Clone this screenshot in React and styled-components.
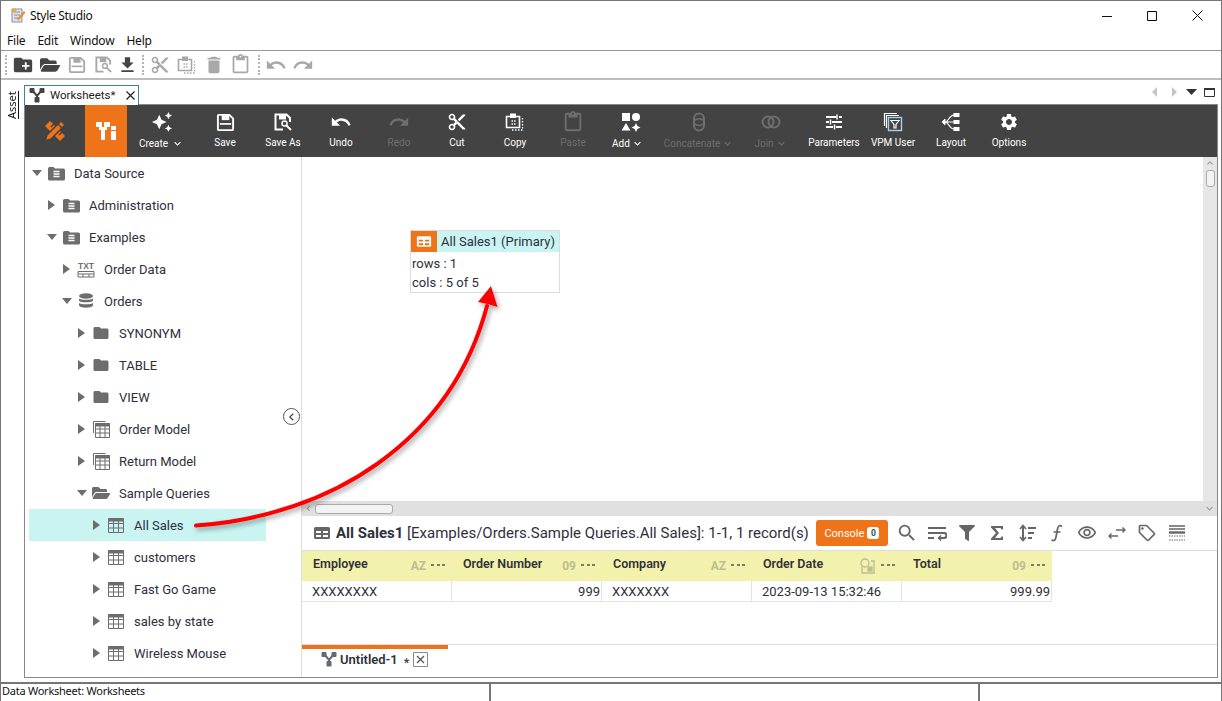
import React from 'react'
import styled, { createGlobalStyle } from 'styled-components'
import {
  MdCreateNewFolder, MdFolder, MdFileDownload, MdContentCut, MdDelete,
  MdOutlineContentPaste, MdUndo, MdRedo, MdAutoAwesome, MdSettings, MdSearch, MdOutlineVisibility,
  MdOutlineLocalOffer, MdExpandMore, MdChevronLeft,
} from 'react-icons/md'
import { FaFilter, FaFolderOpen } from 'react-icons/fa'

const Global = createGlobalStyle`
  html, body { margin: 0; padding: 0; background: #fff; }
  * { box-sizing: border-box; }
  body { font-family: Roboto, "Liberation Sans", sans-serif; color: #2c2c38; overflow: hidden; }
`

const Page = styled.div`
  position: relative;
  width: 1222px;
  height: 701px;
  overflow: hidden;
  display: flex;
  flex-direction: column;
  border: 1px solid #767676;
  border-bottom: none;
  background: #fff;
`

const TitleBar = styled.div`
  height: 29px;
  display: flex;
  align-items: center;
  padding-left: 8px;
  gap: 4px;
  font: 12px "Noto Sans", "Liberation Sans", sans-serif;
  color: #111;
`
const TitleText = styled.span`
  flex: 1;
  letter-spacing: -0.3px;
`
const WinButtons = styled.div`
  display: flex;
  align-self: flex-start;
  margin-top: 8px;
  padding-right: 18px;
  svg { display: block; margin-left: 35px; }
`
const MenuBar = styled.div`
  height: 21px;
  display: flex;
  align-items: center;
  padding-left: 6px;
  gap: 12px;
  font: 12px "Noto Sans", "Liberation Sans", sans-serif;
  letter-spacing: -0.2px;
  color: #111;
  border-bottom: 1px solid #9a9a9a;
`
const IconBar = styled.div`
  height: 29px;
  display: flex;
  align-items: center;
  padding-left: 4px;
  border-bottom: 2px solid #bdbdbd;
`
const Grip = styled.span`
  width: 1px;
  height: 20px;
  border-left: 2px dotted #b5b5b5;
  margin: 0 2px 0 4px;
  flex: none;
  &:first-child { margin-left: 0; }
`
const BarIcon = styled.span`
  width: ${p => p.$w || 27}px;
  flex: none;
  display: flex;
  justify-content: center;
  color: ${p => (p.$off ? '#a8a8a8' : '#444')};
  svg { display: block; }
`
const Workspace = styled.div`
  flex: 1;
  display: flex;
  min-height: 0;
`
const AssetStrip = styled.div`
  width: 23px;
  flex: none;
  padding-top: 11px;
  display: flex;
  justify-content: center;
`
const AssetText = styled.span`
  writing-mode: vertical-rl;
  transform: rotate(180deg);
  font: 11px "Noto Sans", "Liberation Sans", sans-serif;
  color: #111;
  height: 28px;
  border-left: 1px solid #111;
  line-height: 12px;
`
const Main = styled.div`
  width: 1194px;
  flex: none;
  display: flex;
  flex-direction: column;
`
const TabRow = styled.div`
  height: 25px;
  flex: none;
  display: flex;
  align-items: flex-end;
  justify-content: space-between;
  border-bottom: 1px solid #888;
`
const DocTab = styled.div`
  width: 115px;
  height: 20px;
  margin-bottom: -1px;
  display: flex;
  align-items: center;
  gap: 5px;
  padding: 0 0 1px 4px;
  background: #fff;
  border: 1px solid #3f7fae;
  border-bottom: none;
  font-size: 11.500px;
  color: #222;
`
const TabClose = styled.span`
  margin-left: 6px;
  display: flex;
`
const TabTools = styled.div`
  display: flex;
  align-items: center;
  height: 24px;
  gap: 7px;
  margin-right: 3px;
  svg { display: block; }
`
const Frame = styled.div`
  flex: 1;
  display: flex;
  flex-direction: column;
  min-height: 0;
  border-left: 1px solid #888;
  border-right: 1px solid #888;
  border-bottom: 1px solid #888;
`
const Ribbon = styled.div`
  height: 52px;
  flex: none;
  display: flex;
  background: #434343;
`
const LogoCell = styled.div`
  width: 60px;
  display: flex;
  align-items: center;
  justify-content: center;
`
const ActiveCell = styled.div`
  width: 42px;
  background: #ef7319;
  display: flex;
  align-items: center;
  justify-content: center;
`
const RibbonBtn = styled.div`
  width: ${p => p.$w || 58}px;
  flex: none;
  display: flex;
  flex-direction: column;
  align-items: center;
  padding-top: 5px;
  color: ${p => (p.$off ? '#6e6e6e' : '#fff')};
`
const RibbonIcon = styled.span`
  height: 24px;
  display: flex;
  align-items: center;
  justify-content: center;
  svg { display: block; }
`
const RibbonLabel = styled.span`
  margin: 3px ${p => p.$pull || 0}px 0 0;
  font-size: 10px;
  line-height: 12px;
  white-space: nowrap;
  display: flex;
  align-items: center;
  gap: ${p => p.$gap || 1}px;
`
const Body = styled.div`
  flex: 1;
  display: flex;
  min-height: 0;
`
const TreePane = styled.div`
  width: 277px;
  flex: none;
  border-right: 1px solid #dcdcdc;
  overflow: hidden;
  position: relative;
`
const CollapseBtn = styled.span`
  position: absolute;
  right: 1px;
  top: 251px;
  width: 17px;
  height: 17px;
  border: 1.500px solid #555;
  border-radius: 50%;
  background: #fff;
  color: #444;
  display: flex;
  align-items: center;
  justify-content: center;
`
const TreeRow = styled.div`
  height: 32px;
  width: ${p => (p.$selected ? '237px' : 'auto')};
  margin-left: ${p => (p.$selected ? '4px' : '0')};
  padding-left: ${p => 7 + p.$level * 15 - (p.$selected ? 4 : 0)}px;
  display: flex;
  align-items: center;
  font-size: 13px;
  color: #2f2f3c;
  background: ${p => (p.$selected ? '#c9f4f2' : 'transparent')};
`
const Caret = styled.span`
  width: 0;
  height: 0;
  flex: none;
  margin-right: ${p => (p.$open ? '5px' : '7px')};
  margin-left: ${p => (p.$open ? '0' : '1px')};
  ${p => (p.$open
    ? 'border-left:5px solid transparent;border-right:5px solid transparent;border-top:6.5px solid #6d6d6d;'
    : 'border-top:5px solid transparent;border-bottom:5px solid transparent;border-left:7px solid #6d6d6d;')}
`
const TreeIcon = styled.span`
  width: 18px;
  height: 18px;
  flex: none;
  display: flex;
  align-items: center;
  justify-content: center;
  margin-right: 9px;
  color: #6d6d6d;
  svg { display: block; }
`
const RightCol = styled.div`
  flex: 1;
  min-width: 0;
  display: flex;
  flex-direction: column;
`
const CanvasRow = styled.div`
  height: 344px;
  flex: none;
  display: flex;
`
const Canvas = styled.div`
  flex: 1;
  position: relative;
  background: #fff;
`
const VScroll = styled.div`
  width: 14px;
  flex: none;
  background: #e6e6e6;
  display: flex;
  flex-direction: column;
  align-items: center;
  color: #999;
`
const VThumb = styled.span`
  width: 9px;
  height: 17px;
  margin-top: 1px;
  border: 1px solid #aaa;
  border-radius: 3px;
  background: #f3f3f3;
`
const HScroll = styled.div`
  height: 15px;
  flex: none;
  background: #e0e0e0;
  display: flex;
  align-items: center;
  color: #999;
  padding-left: 1px;
`
const HThumb = styled.span`
  width: 78px;
  height: 10px;
  margin-left: 1px;
  border: 1px solid #aaa;
  border-radius: 3px;
  background: #f3f3f3;
`
const HEnd = styled.span`
  margin-left: auto;
  margin-right: 1px;
  display: flex;
`
const NodeBox = styled.div`
  position: absolute;
  left: 108px;
  top: 73px;
  width: 150px;
  height: 63px;
  border: 1px solid #dcdcdc;
  font-size: 13px;
  color: #2f2f3c;
`
const NodeHead = styled.div`
  height: 21px;
  margin-bottom: 2px;
  display: flex;
  align-items: center;
  background: #c9f4f2;
  gap: 4px;
`
const NodeBadge = styled.span`
  width: 26px;
  height: 21px;
  background: #ef7319;
  display: flex;
  align-items: center;
  justify-content: center;
`
const NodeLine = styled.div`
  padding-left: 1px;
  height: 19px;
  line-height: 19px;
`
const ResultPane = styled.div`
  flex: 1;
  min-height: 0;
  display: flex;
  flex-direction: column;
`
const ResultHead = styled.div`
  height: 35px;
  flex: none;
  display: flex;
  align-items: center;
  padding-left: 11px;
  border-bottom: 1px solid #dedede;
  font-size: 15px;
  color: #2f2f3c;
`
const ResultTitle = styled.span`
  margin-left: 5px;
  white-space: nowrap;
  b { font-weight: 700; }
`
const ConsoleBtn = styled.span`
  margin-left: 7px;
  width: 72px;
  height: 26px;
  flex: none;
  border-radius: 3px;
  background: #ef7319;
  color: #fff;
  font-size: 11px;
  display: flex;
  align-items: center;
  justify-content: center;
  gap: 3px;
`
const ConsoleCount = styled.span`
  width: 12px;
  height: 12px;
  border-radius: 3px;
  background: #fff;
  color: #444;
  font-size: 8.500px;
  font-weight: 700;
  display: flex;
  align-items: center;
  justify-content: center;
`
const ResultTools = styled.div`
  display: flex;
  margin-left: 4px;
`
const ResultTool = styled.span`
  width: 30px;
  display: flex;
  align-items: center;
  justify-content: center;
  color: #666;
  svg { display: block; }
`
const Grid = styled.div`
  display: grid;
  grid-template-columns: repeat(5, 150px);
  width: 750px;
`
const HeadCell = styled.div`
  height: 30px;
  background: #f2f2ac;
  display: flex;
  padding: 6px 7px 0 11px;
  font-size: 12.500px;
  font-weight: 600;
  color: #33303a;
  line-height: 14px;
`
const HeadName = styled.span`
  flex: 1;
`
const TypeTag = styled.span`
  font-size: 12px;
  font-weight: 700;
  color: #bdbd94;
  margin-top: 2px;
  display: flex;
`
const DateMark = styled.span`
  display: flex;
  margin-top: 1px;
  svg { display: block; }
`
const Dots = styled.span`
  display: flex;
  gap: 2.500px;
  margin: 7px 0 0 5px;
  height: 3px;
  i { width: 3px; height: 2px; background: #7a7a70; display: block; }
`
const DataCell = styled.div`
  height: 21px;
  padding: 0 1px 0 10px;
  border-right: 1px solid #e3e3e3;
  border-bottom: 1px solid #e3e3e3;
  font-size: 13px;
  line-height: 21px;
  color: #2f2f3c;
  text-align: ${p => (p.$num ? 'right' : 'left')};
`
const Spacer = styled.div`
  flex: 1;
`
const SheetBar = styled.div`
  height: 33px;
  flex: none;
  border-top: 1px solid #e0e0e0;
`
const SheetTab = styled.div`
  width: 146px;
  height: 32px;
  border-top: 4px solid #ef7319;
  display: flex;
  align-items: center;
  padding: 0 0 8px 19px;
  gap: 3px;
  font-size: 13px;
  font-weight: 600;
  color: #2f2f3c;
`
const Star = styled.span`
  margin: 6px 1px 0 3px;
  font-size: 13px;
  font-weight: 400;
`
const StatusBar = styled.div`
  height: 19px;
  margin-top: 4px;
  flex: none;
  display: grid;
  grid-template-columns: 490px 489px 1fr;
  border-top: 2px solid #767676;
  font: 11px "Noto Sans", "Liberation Sans", sans-serif;
  letter-spacing: -0.25px;
  color: #111;
`
const StatusCell = styled.div`
  padding-left: 1px;
  line-height: 14px;
  border-right: 2px solid #767676;
  &:last-child { border-right: none; }
`
const ArrowLayer = styled.svg`
  position: absolute;
  left: 0;
  top: 0;
  pointer-events: none;
`

/* drawn icons */
const AppIcon = () => (
  <svg width="17" height="17" viewBox="0 0 17 17">
    <path d="M3 2h10v13H3z" fill="#dfe3ea" stroke="#8a8fa0" />
    <path d="M5 5h6M5 8h6M5 11h5" stroke="#8a8fa0" />
    <path d="M2 4l4-3 2 2-4 3z" fill="#f2a93b" />
    <path d="M8 12l7-8 1.500 1.500-7 8z" fill="#e98a2c" />
  </svg>
)
const WinMin = () => <svg width="10" height="12" viewBox="0 0 10 12"><path d="M0 7.500h10" stroke="#111" /></svg>
const WinMax = () => <svg width="10" height="12" viewBox="0 0 10 12"><path d="M.5 2.500h9v9h-9z" fill="none" stroke="#111" /></svg>
const WinClose = () => <svg width="11" height="12" viewBox="0 0 11 12"><path d="M.5 1.500l10 10M10.500 1.500l-10 10" stroke="#111" /></svg>
const GraphIcon = ({ size = 16, color = '#444' }) => (
  <svg width={size} height={size} viewBox="0 0 16 16">
    <path d="M3 3l5 6 5-6M8 9v4" stroke={color} strokeWidth="2" fill="none" />
    <rect x="0.500" y="1" width="5" height="5" rx="1" fill={color} />
    <rect x="10.500" y="1" width="5" height="5" rx="1" fill={color} />
    <rect x="5.500" y="10" width="5" height="5.500" rx="1" fill={color} />
  </svg>
)
const SaveIcon = ({ size = 20 }) => (
  <svg width={size} height={size} viewBox="0 0 20 20" fill="none" stroke="currentColor">
    <path d="M2 3a1 1 0 0 1 1-1h11l4 4v11a1 1 0 0 1-1 1H3a1 1 0 0 1-1-1z" strokeWidth="2" />
    <rect x="6" y="2" width="8" height="5.500" fill="currentColor" stroke="none" />
    <path d="M4 11.500h12" strokeWidth="1.800" />
  </svg>
)
const SaveAsIcon = ({ size = 20 }) => (
  <svg width={size} height={size} viewBox="0 0 20 20" fill="none" stroke="currentColor">
    <path d="M17 10V6l-3.500-3.500h-11v15H10" strokeWidth="2" />
    <rect x="6" y="3" width="7" height="4.500" fill="currentColor" stroke="none" />
    <circle cx="11.500" cy="11.500" r="2.500" strokeWidth="1.500" />
    <path d="M13.500 13.500l4.500 4.500" strokeWidth="2" />
  </svg>
)
const CopyIcon = ({ size = 20 }) => (
  <svg width={size} height={size} viewBox="0 0 20 20" fill="none" stroke="currentColor">
    <path d="M1.500 4.500h13v11h-13z" strokeWidth="1.600" />
    <rect x="5" y="1.500" width="6" height="4.500" fill="currentColor" stroke="none" />
    <path d="M6.500 9h1.500M9 9h1.500M6.500 12h1.500M9 12h1.500" strokeWidth="1.400" />
    <path d="M17.500 6v12H6" strokeWidth="1.300" strokeDasharray="1.500 1.500" />
  </svg>
)
const AddIcon = () => (
  <svg width="20" height="20" viewBox="0 0 20 20" fill="currentColor">
    <rect x="1" y="1" width="8" height="8" />
    <circle cx="15" cy="5" r="4" />
    <path d="M5 11l4.500 7.500H.5zM15 11l1.400 3.100 3.100 1.400-3.100 1.400-1.400 3.100-1.400-3.100-3.100-1.400 3.100-1.400z" />
  </svg>
)
const ConcatIcon = () => (
  <svg width="20" height="20" viewBox="0 0 20 20" fill="none" stroke="currentColor" strokeWidth="2">
    <rect x="5" y="1.500" width="10" height="17" rx="5" />
    <path d="M5.500 8.500c2-2.500 7-2.500 9 0M5.500 11.500c2 2.500 7 2.500 9 0" strokeWidth="1.500" />
  </svg>
)
const JoinIcon = () => (
  <svg width="20" height="20" viewBox="0 0 20 20" fill="none" stroke="currentColor" strokeWidth="2">
    <circle cx="7" cy="10" r="5.500" />
    <circle cx="13" cy="10" r="5.500" />
  </svg>
)
const ParamIcon = () => (
  <svg width="18" height="18" viewBox="0 0 18 18" stroke="currentColor" strokeWidth="2" fill="none">
    <path d="M1 4h10M14 4h3M1 9h3M7 9h10M1 14h7M11 14h6" />
    <path d="M12 1.500v5M5.500 6.500v5M9.500 11.500v5" strokeWidth="1.500" />
  </svg>
)
const VpmIcon = () => (
  <svg width="20" height="20" viewBox="0 0 20 20" fill="none" stroke="currentColor">
    <path d="M1.500 14V1.500H14" strokeWidth="1.200" />
    <path d="M3.500 16V3.500H16" strokeWidth="1.200" />
    <rect x="5.500" y="5.500" width="13" height="13" strokeWidth="1.400" stroke="#9fd3f0" />
    <path d="M8 8.500h8l-3 4v3.500h-2v-3.500z" strokeWidth="1.200" />
  </svg>
)
const LayoutIcon = () => (
  <svg width="20" height="20" viewBox="0 0 20 20" fill="currentColor" stroke="currentColor">
    <path d="M4 10c4 0 4-7 9-7M4 10c4 0 4 7 9 7M4 10h9" fill="none" strokeWidth="1.200" />
    <path d="M1 10l3-3v6z" />
    <rect x="13" y="1.500" width="5" height="3" />
    <rect x="13" y="8.500" width="5" height="3" />
    <rect x="13" y="15.500" width="5" height="3" />
  </svg>
)
const BrandIcon = () => (
  <svg width="26" height="26" viewBox="0 0 26 26" fill="none">
    <path d="M8 3l15 15-5 5L3 8z" fill="#ef7319" />
    <path d="M9 9l3-3M13 13l3-3M17 17l3-3" stroke="#434343" strokeWidth="1.500" />
    <path d="M19 3l4 4L9 21l-6 2 2-6z" fill="#ef7319" stroke="#434343" strokeWidth="1.500" />
    <path d="M16 6l4 4" stroke="#434343" strokeWidth="1.500" />
  </svg>
)
const WorksheetMark = () => (
  <svg width="20" height="20" viewBox="0 0 20 20" fill="#fff">
    <rect x="0" y="1" width="6" height="5" />
    <rect x="8" y="1" width="6" height="5" />
    <rect x="3" y="6" width="8" height="3" />
    <rect x="5" y="9" width="4" height="10" />
    <rect x="15" y="5" width="5" height="4" />
    <rect x="15" y="10" width="5" height="9" />
  </svg>
)
const SourceIcon = () => (
  <svg width="17" height="15" viewBox="0 0 17 15">
    <path d="M0 2.500A1.500 1.500 0 0 1 1.500 1h4l1.500 1.500h8.500A1.500 1.500 0 0 1 17 4v9a1.500 1.500 0 0 1-1.500 1.500h-14A1.500 1.500 0 0 1 0 13z" fill="currentColor" />
    <path d="M5.500 5.500h6M5.500 8h6M5.500 10.500h6" stroke="#fff" strokeWidth="1.400" />
  </svg>
)
const TxtIcon = () => (
  <svg width="18" height="17" viewBox="0 0 18 17" fill="currentColor">
    <text x="1" y="8" fontSize="8.500" fontWeight="700" fontFamily="Liberation Sans">TXT</text>
    <path d="M1 10.500h16v5.500H1z" fill="none" stroke="currentColor" />
    <path d="M1 13h16M6 13v3M12 13v3" stroke="currentColor" />
  </svg>
)
const DbIcon = () => (
  <svg width="16" height="16" viewBox="0 0 16 16" fill="currentColor">
    <ellipse cx="8" cy="3" rx="7" ry="2.800" />
    <path d="M1 5.500c1.500 1.800 12.500 1.800 14 0v2.200c-1.500 2-12.500 2-14 0zM1 10c1.500 1.800 12.500 1.800 14 0v2.600c-1.500 2.900-12.500 2.900-14 0z" />
  </svg>
)
const TableIcon = ({ size = 16 }) => (
  <svg width={size} height={size} viewBox="0 0 16 16" fill="none" stroke="currentColor">
    <path d="M.5 1.500h15v14H.5z" />
    <path d="M.5 3h15" strokeWidth="3" />
    <path d="M.5 6.500h15M.5 11h15M5.500 4v11.500M10.500 4v11.500" />
  </svg>
)
const ModelIcon = () => (
  <svg width="17" height="17" viewBox="0 0 17 17" fill="none" stroke="currentColor">
    <path d="M.5 12V.5h12" />
    <path d="M2.500 2.500h14v14h-14z" />
    <path d="M2.500 4h14" strokeWidth="3" />
    <path d="M2.500 8h14M2.500 12h14M7 5v11.500M12 5v11.500" />
  </svg>
)
const HeadTable = ({ color = '#666', line = '#fff', w = 18, h = 14 }) => (
  <svg width={w} height={h} viewBox="0 0 18 14">
    <rect x="1" y="1" width="16" height="12" rx="1.500" fill={color} />
    <path d="M3 6h5M10 6h5M3 10h5M10 10h5" stroke={line} strokeWidth="2.200" />
  </svg>
)
const WrapIcon = () => (
  <svg width="20" height="18" viewBox="0 0 20 18" fill="none" stroke="currentColor" strokeWidth="2">
    <path d="M1 4h18M1 9h16a2.500 2.500 0 0 1 0 5h-5M1 14h6" />
    <path d="M14 11.500L11.500 14l2.500 2.500" strokeWidth="1.500" />
  </svg>
)
const SigmaIcon = () => (
  <svg width="14" height="16" viewBox="0 0 14 16"><path d="M1 1h12v3.500h-1.500L10.500 3H5l4 5-4 5h5.500l1-1.500H13V15H1v-1.500L6 8 1 2.500z" fill="currentColor" /></svg>
)
const SortIcon = () => (
  <svg width="18" height="18" viewBox="0 0 18 18" fill="none" stroke="currentColor" strokeWidth="2">
    <path d="M5 2v14" />
    <path d="M2 5l3-3.500L8 5M2 13l3 3.500L8 13" strokeWidth="1.600" />
    <path d="M10 4h8M10 9h6M10 14h4" />
  </svg>
)
const FuncIcon = () => (
  <svg width="14" height="18" viewBox="0 0 14 18" fill="none" stroke="currentColor" strokeWidth="1.700">
    <path d="M12 2.500C9.500 0.500 8 2 7.500 5L6 13c-.5 3-2 4.500-4.500 3M3.500 8h7" />
  </svg>
)
const SwapIcon = () => (
  <svg width="18" height="14" viewBox="0 0 18 14" fill="none" stroke="currentColor" strokeWidth="1.400">
    <path d="M8 4h9M14.500 1.500L17 4l-2.500 2.500M10 10H1M3.500 7.500L1 10l2.500 2.500" />
  </svg>
)
const RowsIcon = () => (
  <svg width="18" height="18" viewBox="0 0 18 18" stroke="currentColor" fill="none">
    <path d="M1 2h16M1 5h16" strokeWidth="1.400" />
    <path d="M1 8.500h16" strokeWidth="2.400" />
    <path d="M1 12h16M1 16h16" strokeWidth="1" strokeDasharray="1.500 1" />
  </svg>
)
const TabArrow = ({ dir }) => (
  <svg width="11" height="12" viewBox="0 0 11 12">
    {dir === 'left' && <path d="M7 1v10L2 6z" fill="#c4c4c4" />}
    {dir === 'right' && <path d="M4 1v10l5-5z" fill="#c4c4c4" />}
    {dir === 'down' && <path d="M0 3h11L5.500 9z" fill="#333" />}
  </svg>
)
const TabMax = () => <svg width="11" height="12" viewBox="0 0 11 12"><path d="M.5 2.500h10v8H.5z" fill="none" stroke="#333" /><path d="M0 3h11" stroke="#333" strokeWidth="2" /></svg>
const TinyX = () => <svg width="9" height="9" viewBox="0 0 9 9"><path d="M.5.5l8 8M8.500.5l-8 8" stroke="#222" strokeWidth="1.200" /></svg>
const BoxX = () => (
  <svg width="15" height="15" viewBox="0 0 15 15" fill="none">
    <path d="M.5.500h14v14H.5z" stroke="#8a8a8a" />
    <path d="M4 4l7 7M11 4l-7 7" stroke="#555" strokeWidth="1.300" />
  </svg>
)
const DateTag = () => (
  <svg width="16" height="16" viewBox="0 0 16 16" fill="none" stroke="#bdbd94" strokeWidth="1.300">
    <circle cx="5" cy="5" r="4" />
    <path d="M2 9v6h12V3h-3" />
    <rect x="8" y="9" width="4" height="4" fill="#bdbd94" />
  </svg>
)

const quick = [
  { icon: <MdCreateNewFolder size={22} /> },
  { icon: <FaFolderOpen size={20} /> },
  { icon: <SaveIcon size={18} />, off: true },
  { icon: <SaveAsIcon size={19} />, off: true },
  { icon: <MdFileDownload size={22} />, w: 21 },
  'grip',
  { icon: <MdContentCut size={20} />, off: true },
  { icon: <CopyIcon size={20} />, off: true },
  { icon: <MdDelete size={22} />, off: true },
  { icon: <MdOutlineContentPaste size={21} />, off: true },
  'grip',
  { icon: <MdUndo size={22} />, off: true },
  { icon: <MdRedo size={22} />, off: true },
]

const ribbon = [
  { label: 'Create', w: 69, icon: <MdAutoAwesome size={22} />, menu: true, gap: 3 },
  { label: 'Save', icon: <SaveIcon size={19} /> },
  { label: 'Save As', icon: <SaveAsIcon /> },
  { label: 'Undo', icon: <MdUndo size={22} /> },
  { label: 'Redo', icon: <MdRedo size={22} />, off: true },
  { label: 'Cut', icon: <MdContentCut size={20} /> },
  { label: 'Copy', icon: <CopyIcon /> },
  { label: 'Paste', icon: <MdOutlineContentPaste size={22} />, off: true },
  { label: 'Add', icon: <AddIcon />, menu: true, pull: 6 },
  { label: 'Concatenate', w: 78, icon: <ConcatIcon />, menu: true, off: true },
  { label: 'Join', w: 66, icon: <JoinIcon />, menu: true, off: true },
  { label: 'Parameters', w: 60, icon: <ParamIcon /> },
  { label: 'VPM User', icon: <VpmIcon /> },
  { label: 'Layout', icon: <LayoutIcon /> },
  { label: 'Options', icon: <MdSettings size={20} /> },
]

const tree = [
  { label: 'Data Source', level: 0, open: true, icon: <SourceIcon /> },
  { label: 'Administration', level: 1, icon: <SourceIcon /> },
  { label: 'Examples', level: 1, open: true, icon: <SourceIcon /> },
  { label: 'Order Data', level: 2, icon: <TxtIcon /> },
  { label: 'Orders', level: 2, open: true, icon: <DbIcon /> },
  { label: 'SYNONYM', level: 3, icon: <MdFolder size={20} /> },
  { label: 'TABLE', level: 3, icon: <MdFolder size={20} /> },
  { label: 'VIEW', level: 3, icon: <MdFolder size={20} /> },
  { label: 'Order Model', level: 3, icon: <ModelIcon /> },
  { label: 'Return Model', level: 3, icon: <ModelIcon /> },
  { label: 'Sample Queries', level: 3, open: true, icon: <FaFolderOpen size={18} /> },
  { label: 'All Sales', level: 4, selected: true, icon: <TableIcon /> },
  { label: 'customers', level: 4, icon: <TableIcon /> },
  { label: 'Fast Go Game', level: 4, icon: <TableIcon /> },
  { label: 'sales by state', level: 4, icon: <TableIcon /> },
  { label: 'Wireless Mouse', level: 4, icon: <TableIcon /> },
]

const columns = [
  { name: 'Employee', tag: 'AZ', value: 'XXXXXXXX' },
  { name: 'Order Number', tag: '09', value: '999', num: true },
  { name: 'Company', tag: 'AZ', value: 'XXXXXXX' },
  { name: 'Order Date', date: true, value: '2023-09-13 15:32:46' },
  { name: 'Total', tag: '09', value: '999.99', num: true },
]

const tools = [
  <MdSearch size={22} />, <WrapIcon />, <FaFilter size={16} />, <SigmaIcon />, <SortIcon />,
  <FuncIcon />, <MdOutlineVisibility size={20} />, <SwapIcon />, <MdOutlineLocalOffer size={20} />, <RowsIcon />,
]

const App = () => (
  <Page>
    <Global />
    <TitleBar>
      <AppIcon />
      <TitleText>Style Studio</TitleText>
      <WinButtons><WinMin /><WinMax /><WinClose /></WinButtons>
    </TitleBar>
    <MenuBar>
      <span>File</span><span>Edit</span><span>Window</span><span>Help</span>
    </MenuBar>
    <IconBar>
      <Grip />
      {quick.map((q, i) => (q === 'grip'
        ? <Grip key={i} />
        : <BarIcon key={i} $off={q.off} $w={q.w}>{q.icon}</BarIcon>))}
    </IconBar>
    <Workspace>
      <AssetStrip><AssetText>Asset</AssetText></AssetStrip>
      <Main>
        <TabRow>
          <DocTab>
            <GraphIcon />
            <span>Worksheets*</span>
            <TabClose><TinyX /></TabClose>
          </DocTab>
          <TabTools>
            <TabArrow dir="left" /><TabArrow dir="right" /><TabArrow dir="down" /><TabMax />
          </TabTools>
        </TabRow>
        <Frame>
          <Ribbon>
            <LogoCell><BrandIcon /></LogoCell>
            <ActiveCell><WorksheetMark /></ActiveCell>
            {ribbon.map(b => (
              <RibbonBtn key={b.label} $w={b.w} $off={b.off}>
                <RibbonIcon>{b.icon}</RibbonIcon>
                <RibbonLabel $gap={b.gap} $pull={b.pull}>
                  {b.label}
                  {b.menu && <MdExpandMore size={13} />}
                </RibbonLabel>
              </RibbonBtn>
            ))}
          </Ribbon>
          <Body>
            <TreePane>
              {tree.map(t => (
                <TreeRow key={t.label} $level={t.level} $selected={t.selected}>
                  <Caret $open={t.open} />
                  <TreeIcon>{t.icon}</TreeIcon>
                  {t.label}
                </TreeRow>
              ))}
              <CollapseBtn><MdChevronLeft size={16} /></CollapseBtn>
            </TreePane>
            <RightCol>
              <CanvasRow>
                <Canvas>
                  <NodeBox>
                    <NodeHead>
                      <NodeBadge><HeadTable color="#fff" line="#ef7319" w={16} h={13} /></NodeBadge>
                      All Sales1 (Primary)
                    </NodeHead>
                    <NodeLine>rows : 1</NodeLine>
                    <NodeLine>cols : 5 of 5</NodeLine>
                  </NodeBox>
                </Canvas>
                <VScroll>
                  <MdExpandMore size={12} style={{ transform: 'rotate(180deg)' }} />
                  <VThumb />
                </VScroll>
              </CanvasRow>
              <HScroll>
                <MdChevronLeft size={11} />
                <HThumb />
                <HEnd><MdExpandMore size={13} /></HEnd>
              </HScroll>
              <ResultPane>
                <ResultHead>
                  <HeadTable />
                  <ResultTitle><b>All Sales1</b> [Examples/Orders.Sample Queries.All Sales]: 1-1, 1 record(s)</ResultTitle>
                  <ConsoleBtn>Console<ConsoleCount>0</ConsoleCount></ConsoleBtn>
                  <ResultTools>
                    {tools.map((t, i) => <ResultTool key={i}>{t}</ResultTool>)}
                  </ResultTools>
                </ResultHead>
                <Grid>
                  {columns.map(c => (
                    <HeadCell key={c.name}>
                      <HeadName>{c.name}</HeadName>
                      {c.date ? <DateMark><DateTag /></DateMark> : <TypeTag>{c.tag}</TypeTag>}
                      <Dots><i /><i /><i /></Dots>
                    </HeadCell>
                  ))}
                  {columns.map(c => <DataCell key={c.name} $num={c.num}>{c.value}</DataCell>)}
                </Grid>
                <Spacer />
                <SheetBar>
                  <SheetTab>
                    <GraphIcon color="#5f6b76" />
                    Untitled-1
                    <Star>*</Star>
                    <BoxX />
                  </SheetTab>
                </SheetBar>
              </ResultPane>
            </RightCol>
          </Body>
        </Frame>
      </Main>
    </Workspace>
    <StatusBar>
      <StatusCell>Data Worksheet: Worksheets</StatusCell>
      <StatusCell />
      <StatusCell />
    </StatusBar>
    <ArrowLayer width="1222" height="701" viewBox="0 0 1222 701">
      <defs>
        <filter id="arrowShadow" x="-10%" y="-10%" width="125%" height="125%">
          <feDropShadow dx="2" dy="3" stdDeviation="2.500" floodColor="#000" floodOpacity="0.35" />
        </filter>
      </defs>
      <g filter="url(#arrowShadow)">
        <path d="M195 524.500C330 515 450 440 486 305" fill="none" stroke="#f00" strokeWidth="4" strokeLinecap="round" />
        <path d="M490 285L496.500 306 487 303 477 301z" fill="#f00" />
      </g>
    </ArrowLayer>
  </Page>
)

export default App
